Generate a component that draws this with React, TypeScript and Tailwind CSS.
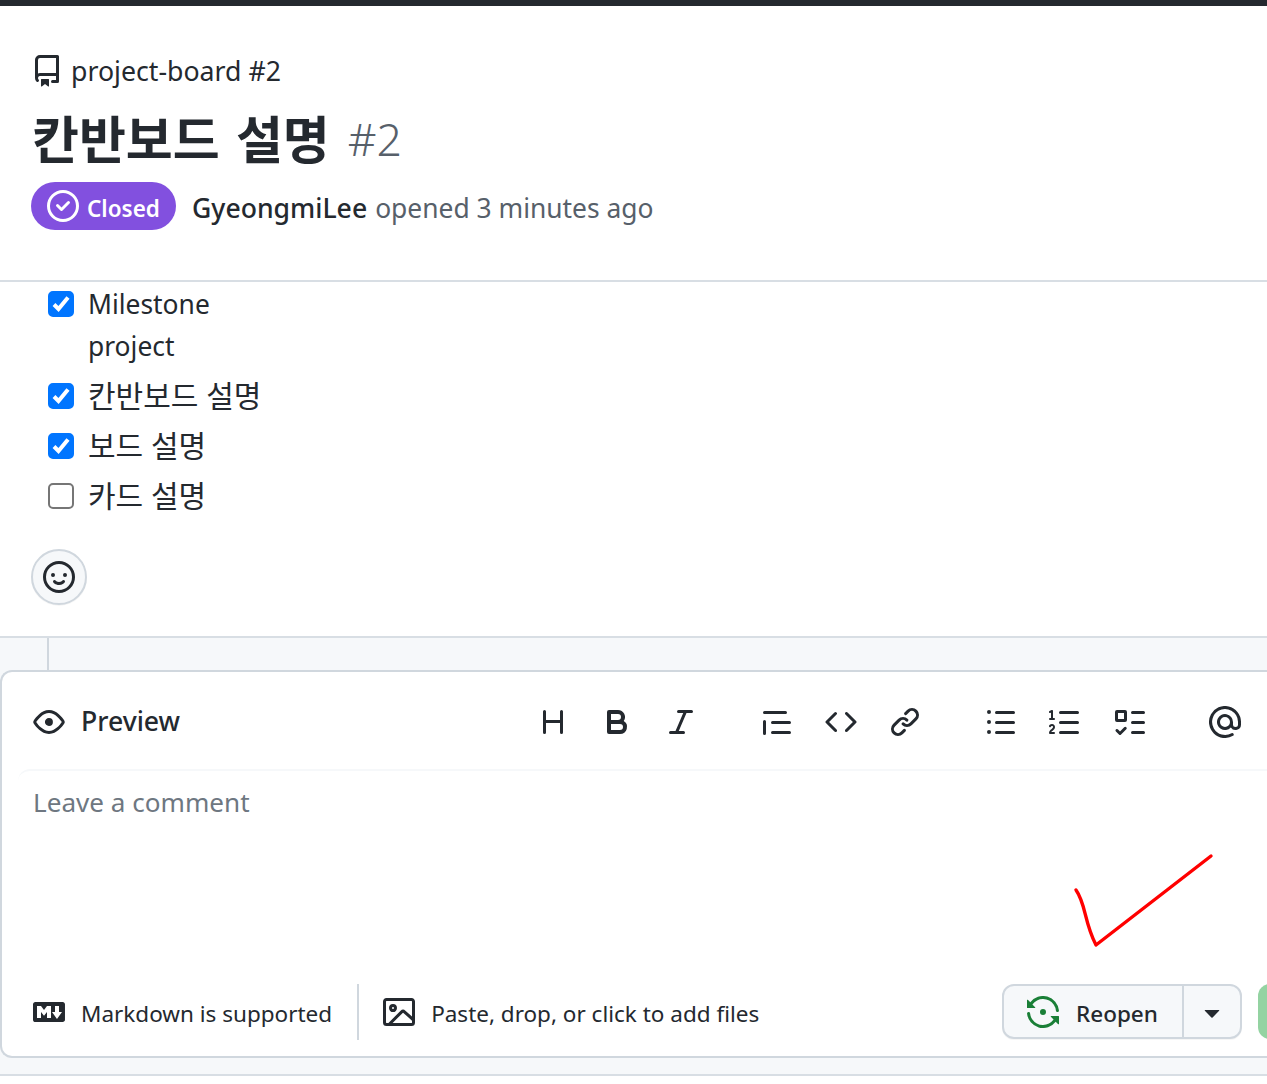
const font = { fontFamily: '"Noto Sans", "Noto Sans CJK KR", sans-serif' };

function Oct({ d, className = "w-8 h-8" }: { d: string; className?: string }) {
  return (
    <svg viewBox="0 0 16 16" fill="currentColor" className={className}>
      <path fillRule="evenodd" d={d} />
    </svg>
  );
}

const icons = {
  repo: "M2 2.5A2.5 2.5 0 0 1 4.5 0h8.75a.75.75 0 0 1 .75.75v12.5a.75.75 0 0 1-.75.75h-2.5a.75.75 0 0 1 0-1.5h1.75v-2h-8a1 1 0 0 0-.714 1.7.75.75 0 1 1-1.072 1.05A2.495 2.495 0 0 1 2 11.5Zm10.5-1h-8a1 1 0 0 0-1 1v6.708A2.486 2.486 0 0 1 4.5 9h8ZM5 12.25a.25.25 0 0 1 .25-.25h3.5a.25.25 0 0 1 .25.25v3.25a.25.25 0 0 1-.4.2l-1.45-1.087a.249.249 0 0 0-.3 0L5.4 15.7a.25.25 0 0 1-.4-.2Z",
  closed: "M11.28 6.78a.75.75 0 0 0-1.06-1.06L7.25 8.69 5.78 7.22a.75.75 0 0 0-1.06 1.06l2 2a.75.75 0 0 0 1.06 0l3.5-3.5ZM16 8A8 8 0 1 1 0 8a8 8 0 0 1 16 0Zm-1.5 0a6.5 6.5 0 1 0-13 0 6.5 6.5 0 0 0 13 0Z",
  smiley: "M8 0a8 8 0 1 1 0 16A8 8 0 0 1 8 0ZM1.5 8a6.5 6.5 0 1 0 13 0 6.5 6.5 0 0 0-13 0Zm3.82 1.636a.75.75 0 0 1 1.038.175l.007.009c.103.118.22.222.35.31.264.178.683.37 1.285.37.602 0 1.02-.192 1.285-.371.13-.088.247-.192.35-.31l.007-.008a.75.75 0 0 1 1.222.87l-.022-.015c.02.013.021.015.021.015v.001l-.001.002-.002.003-.005.007-.014.019a2.066 2.066 0 0 1-.184.213c-.16.166-.338.316-.53.445-.63.418-1.37.638-2.127.629-.946 0-1.652-.308-2.126-.63a3.331 3.331 0 0 1-.715-.657l-.014-.02-.005-.006-.002-.003v-.002h-.001l.613-.432-.614.43a.75.75 0 0 1 .183-1.044ZM12 7a1 1 0 1 1-2 0 1 1 0 0 1 2 0ZM5 8a1 1 0 1 1 0-2 1 1 0 0 1 0 2Z",
  eye: "M8 2c1.981 0 3.671.992 4.933 2.078 1.27 1.091 2.187 2.345 2.637 3.023a1.62 1.62 0 0 1 0 1.798c-.45.678-1.367 1.932-2.637 3.023C11.67 13.008 9.981 14 8 14c-1.981 0-3.671-.992-4.933-2.078C1.797 10.83.88 9.576.43 8.898a1.62 1.62 0 0 1 0-1.798c.45-.677 1.367-1.931 2.637-3.022C4.33 2.992 6.019 2 8 2ZM1.679 7.932a.12.12 0 0 0 0 .136c.411.622 1.241 1.75 2.366 2.717C5.176 11.758 6.527 12.5 8 12.5c1.473 0 2.825-.742 3.955-1.715 1.124-.967 1.954-2.096 2.366-2.717a.12.12 0 0 0 0-.136c-.412-.621-1.242-1.75-2.366-2.717C10.824 4.242 9.473 3.5 8 3.5c-1.473 0-2.825.742-3.955 1.715-1.124.967-1.954 2.096-2.366 2.717ZM8 10a2 2 0 1 1-.001-3.999A2 2 0 0 1 8 10Z",
  heading: "M3.75 2a.75.75 0 0 1 .75.75V7h7V2.75a.75.75 0 0 1 1.5 0v10.5a.75.75 0 0 1-1.5 0V8.5h-7v4.75a.75.75 0 0 1-1.5 0V2.75A.75.75 0 0 1 3.75 2Z",
  bold: "M4 2h4.5a3.501 3.501 0 0 1 2.852 5.53A3.499 3.499 0 0 1 9.5 14H4a1 1 0 0 1-1-1V3a1 1 0 0 1 1-1Zm1 7v3h4.5a1.5 1.5 0 0 0 0-3Zm3.5-2a1.5 1.5 0 0 0 0-3H5v3Z",
  italic: "M6 2.75A.75.75 0 0 1 6.75 2h6.5a.75.75 0 0 1 0 1.5h-2.505l-3.858 9H9.25a.75.75 0 0 1 0 1.5h-6.5a.75.75 0 0 1 0-1.5h2.505l3.858-9H6.75A.75.75 0 0 1 6 2.75Z",
  quote: "M1.75 2.5h10.5a.75.75 0 0 1 0 1.5H1.75a.75.75 0 0 1 0-1.5Zm4 5h8.5a.75.75 0 0 1 0 1.5h-8.5a.75.75 0 0 1 0-1.5Zm0 5h8.5a.75.75 0 0 1 0 1.5h-8.5a.75.75 0 0 1 0-1.5ZM2.5 7.75v6a.75.75 0 0 1-1.5 0v-6a.75.75 0 0 1 1.5 0Z",
  code: "m11.28 3.22 4.25 4.25a.75.75 0 0 1 0 1.06l-4.25 4.25a.749.749 0 0 1-1.275-.326.749.749 0 0 1 .215-.734L13.94 8l-3.72-3.72a.749.749 0 0 1 .326-1.275.749.749 0 0 1 .734.215Zm-6.56 0a.751.751 0 0 1 1.042.018.751.751 0 0 1 .018 1.042L2.06 8l3.72 3.72a.749.749 0 0 1-.326 1.275.749.749 0 0 1-.734-.215L.47 8.53a.75.75 0 0 1 0-1.06Z",
  link: "m7.775 3.275 1.25-1.25a3.5 3.5 0 1 1 4.95 4.95l-2.5 2.5a3.5 3.5 0 0 1-4.95 0 .751.751 0 0 1 .018-1.042.751.751 0 0 1 1.042-.018 1.998 1.998 0 0 0 2.83 0l2.5-2.5a2.002 2.002 0 0 0-2.83-2.83l-1.25 1.25a.751.751 0 0 1-1.042-.018.751.751 0 0 1-.018-1.042Zm-4.69 9.64a1.998 1.998 0 0 0 2.83 0l1.25-1.25a.751.751 0 0 1 1.042.018.751.751 0 0 1 .018 1.042l-1.25 1.25a3.5 3.5 0 1 1-4.95-4.95l2.5-2.5a3.5 3.5 0 0 1 4.95 0 .751.751 0 0 1-.018 1.042.751.751 0 0 1-1.042.018 1.998 1.998 0 0 0-2.83 0l-2.5 2.5a1.998 1.998 0 0 0 0 2.83Z",
  ul: "M5.75 2.5h8.5a.75.75 0 0 1 0 1.5h-8.5a.75.75 0 0 1 0-1.5Zm0 5h8.5a.75.75 0 0 1 0 1.5h-8.5a.75.75 0 0 1 0-1.5Zm0 5h8.5a.75.75 0 0 1 0 1.5h-8.5a.75.75 0 0 1 0-1.5ZM2 14a1 1 0 1 1 0-2 1 1 0 0 1 0 2Zm1-6a1 1 0 1 1-2 0 1 1 0 0 1 2 0ZM2 4a1 1 0 1 1 0-2 1 1 0 0 1 0 2Z",
  ol: "M5 3.25a.75.75 0 0 1 .75-.75h8.5a.75.75 0 0 1 0 1.5h-8.5A.75.75 0 0 1 5 3.25Zm0 5a.75.75 0 0 1 .75-.75h8.5a.75.75 0 0 1 0 1.5h-8.5A.75.75 0 0 1 5 8.25Zm0 5a.75.75 0 0 1 .75-.75h8.5a.75.75 0 0 1 0 1.5h-8.5a.75.75 0 0 1-.75-.75ZM.924 10.32a.5.5 0 0 1-.851-.525l.001-.001.001-.002.002-.004.007-.011c.097-.144.215-.273.348-.384.228-.19.588-.392 1.068-.392.468 0 .858.181 1.126.484.259.294.377.673.377 1.038 0 .987-.686 1.495-1.156 1.845l-.047.035c-.303.225-.522.4-.654.597h1.357a.5.5 0 0 1 0 1H.5a.5.5 0 0 1-.5-.5c0-1.005.692-1.52 1.167-1.875l.035-.025c.531-.396.8-.625.8-1.078a.57.57 0 0 0-.128-.376C1.806 10.068 1.695 10 1.5 10a.658.658 0 0 0-.429.163.835.835 0 0 0-.144.153ZM2.003 2.5V6h.503a.5.5 0 0 1 0 1H.5a.5.5 0 0 1 0-1h.503V3.308l-.28.14a.5.5 0 0 1-.446-.895l1.003-.5a.5.5 0 0 1 .723.447Z",
  task: "M2 2h4a1 1 0 0 1 1 1v4a1 1 0 0 1-1 1H2a1 1 0 0 1-1-1V3a1 1 0 0 1 1-1Zm4.655 8.595a.75.75 0 0 1 0 1.06L4.03 14.28a.75.75 0 0 1-1.06 0l-1.5-1.5a.749.749 0 0 1 .326-1.275.749.749 0 0 1 .734.215l.97.97 2.095-2.095a.75.75 0 0 1 1.06 0ZM9.75 2.5h5.5a.75.75 0 0 1 0 1.5h-5.5a.75.75 0 0 1 0-1.5Zm0 5h5.5a.75.75 0 0 1 0 1.5h-5.5a.75.75 0 0 1 0-1.5Zm0 5h5.5a.75.75 0 0 1 0 1.5h-5.5a.75.75 0 0 1 0-1.5Zm-7.25-9v3h3v-3Z",
  mention: "M4.75 2.37a6.501 6.501 0 0 0 6.5 11.26.75.75 0 0 1 .75 1.298A7.999 7.999 0 0 1 .989 4.148 8 8 0 0 1 16 7.75v1.5a2.75 2.75 0 0 1-5.072 1.475 3.999 3.999 0 0 1-6.65-4.19A4 4 0 0 1 12 8v1.25a1.25 1.25 0 0 0 2.5 0V7.867a6.5 6.5 0 0 0-9.75-5.496ZM10.5 8a2.5 2.5 0 1 0-5 0 2.5 2.5 0 0 0 5 0Z",
  markdown: "M14.85 3c.63 0 1.15.52 1.14 1.15v7.7c0 .63-.51 1.15-1.15 1.15H1.15C.52 13 0 12.48 0 11.84V4.15C0 3.52.52 3 1.15 3ZM9 11V5H7L5.5 7 4 5H2v6h2V8l1.5 1.92L7 8v3Zm2.99.5L14.5 8H13V5h-2v3H9.5Z",
  image: "M16 13.25A1.75 1.75 0 0 1 14.25 15H1.75A1.75 1.75 0 0 1 0 13.25V2.75C0 1.784.784 1 1.75 1h12.5c.966 0 1.75.784 1.75 1.75ZM1.75 2.5a.25.25 0 0 0-.25.25v10.5c0 .138.112.25.25.25h.94l.03-.03 6.077-6.078a1.75 1.75 0 0 1 2.412-.06L14.5 10.31V2.75a.25.25 0 0 0-.25-.25Zm12.5 11a.25.25 0 0 0 .25-.25v-.917l-4.298-3.889a.25.25 0 0 0-.344.009L4.81 13.5ZM7 6a2 2 0 1 1-3.999.001A2 2 0 0 1 7 6ZM5.5 6a.5.5 0 1 0-1 0 .5.5 0 0 0 1 0Z",
  caret: "m4.427 7.427 3.396 3.396a.25.25 0 0 0 .354 0l3.396-3.396A.25.25 0 0 0 11.396 7H4.604a.25.25 0 0 0-.177.427Z",
};

const reopenArc = "M5.029 2.217a6.5 6.5 0 0 1 9.437 5.11.75.75 0 1 0 1.492-.154 8 8 0 0 0-14.315-4.03L.427 1.927A.25.25 0 0 0 0 2.104V5.75A.25.25 0 0 0 .25 6h3.646a.25.25 0 0 0 .177-.427L2.715 4.215a6.491 6.491 0 0 1 2.314-1.998Z";

function ReopenIcon() {
  return (
    <svg viewBox="0 0 16 16" fill="currentColor" className="w-8 h-8 text-[#1a7f37]">
      <path d={reopenArc} />
      <path d={reopenArc} transform="rotate(180 8 8)" />
      <path d="M9.5 8a1.5 1.5 0 1 1-3.001-.001A1.5 1.5 0 0 1 9.5 8Z" />
    </svg>
  );
}

function Task({ label, checked, rowClass, labelClass }: { label: string; checked: boolean; rowClass: string; labelClass: string }) {
  return (
    <div className={`flex items-center ${rowClass}`}>
      <span className="relative w-[26px] h-[26px] shrink-0">
        <input
          type="checkbox"
          checked={checked}
          readOnly
          className="block appearance-none w-[26px] h-[26px] m-0 rounded-[5px] border-2 border-[#767676] bg-white checked:bg-[#0075ff] checked:border-[#0075ff]"
        />
        {checked && (
          <svg viewBox="0 0 26 26" fill="none" className="absolute inset-0 w-[26px] h-[26px]">
            <path d="M6 13.5 10.5 18 20 6.5" stroke="#fff" strokeWidth="4" />
          </svg>
        )}
      </span>
      <span className={`ml-[14px] ${labelClass}`}>{label}</span>
    </div>
  );
}

function Toolbar() {
  const groups = [
    [icons.heading, icons.bold, icons.italic],
    [icons.quote, icons.code, icons.link],
    [icons.ul, icons.ol, icons.task],
    [icons.mention],
  ];
  return (
    <div className="ml-auto flex gap-16 pr-[26px] text-[#24292f]">
      {groups.map((g, i) => (
        <div key={i} className="flex gap-8">
          {g.map((d) => (
            <Oct key={d} d={d} />
          ))}
        </div>
      ))}
    </div>
  );
}

export default function App() {
  return (
    <div style={font} className="w-[1267px] h-[1084px] overflow-hidden bg-white text-[#24292f] text-[26.4px] relative">
      <div className="h-[6px] bg-[#24292f]" />

      <header className="h-[276px] border-b-2 border-[#d8dee4] pl-8 pt-[47px]">
        <div className="flex items-center h-[34px] leading-[34px] text-[26.7px]">
          <Oct d={icons.repo} className="w-8 h-8 mr-[7px] mt-[2px] -ml-[1px]" />
          <span className="ml-[2px] pt-[2px] -translate-x-[1px]">project-board #2</span>
        </div>
        <h1 className="flex items-baseline h-[66px] mt-[19px] leading-[66px] text-[51px] font-bold [word-spacing:3px]">
          칸반보드 설명
          <span className="ml-[18px] text-[44.5px] font-light text-[#57606a] -translate-y-[3px]">#2</span>
        </h1>
        <div className="flex items-center mt-[10px] h-[48px]">
          <span className="flex items-center h-[48px] w-[145px] -ml-[1px] rounded-full bg-[#8250df] text-white text-[22.5px] font-semibold pl-4">
            <Oct d={icons.closed} className="w-8 h-8 mr-[8px]" />
            <span className="pt-[5px]">Closed</span>
          </span>
          <span className="ml-4 pt-[6px] font-medium text-[26.6px]">GyeongmiLee</span>
          <span className="ml-2 pt-[6px] text-[#57606a]">opened 3 minutes ago</span>
        </div>
      </header>

      <section className="h-[354px] pl-12 pt-[1px]">
        <Task label="Milestone" checked rowClass="h-[42px]" labelClass="pt-[2px]" />
        <div className="h-[42px] leading-[42px] pl-[40px]">project</div>
        <Task label="칸반보드 설명" checked rowClass="h-[50px] mt-[4px] text-[30px]" labelClass="pb-[2px]" />
        <Task label="보드 설명" checked rowClass="h-[50px] text-[30px]" labelClass="pb-[2px]" />
        <Task label="카드 설명" checked={false} rowClass="h-[50px] text-[30px]" labelClass="pb-[2px]" />
        <div className="mt-[28px] -ml-[17px] w-[56px] h-[56px] rounded-full border-2 border-[#d0d7de] bg-[#f6f8fa] flex items-center justify-center shadow-[0_1px_0_rgba(27,31,36,0.04)]">
          <Oct d={icons.smiley} />
        </div>
      </section>

      <section className="h-[440px] bg-[#f6f8fa] border-y-2 border-[#d8dee4]">
        <div className="ml-[47px] w-[2px] h-[32px] bg-[#d0d7de]" />
        <div className="h-[388px] rounded-l-xl border-2 border-r-0 border-[#d0d7de] bg-white overflow-hidden flex flex-col">
          <div className="flex items-center h-[97px] pt-[2px] pl-[31px]">
            <Oct d={icons.eye} />
            <span className="ml-4 font-medium text-[26.6px]">Preview</span>
            <Toolbar />
          </div>
          <div className="h-[196px] ml-4 rounded-tl-xl border-t-2 border-[#f6f8fa] pl-[15px] pt-[11px] text-[#6e7781] text-[26.1px] leading-[40px]">
            Leave a comment
          </div>
          <div className="flex items-center flex-1 pt-[2px] pl-[31px] text-[22.5px]">
            <Oct d={icons.markdown} />
            <span className="ml-4 pt-[4px]">Markdown is supported</span>
            <div className="ml-[25px] w-[2px] h-[56px] bg-[#d0d7de]" />
            <Oct d={icons.image} className="w-8 h-8 ml-[24px]" />
            <span className="ml-4 pt-[4px]">Paste, drop, or click to add files</span>
            <div className="ml-auto flex h-[55px] w-[240px] rounded-xl border-2 border-[#d0d7de] bg-[#f6f8fa] shadow-[0_1px_0_rgba(27,31,36,0.04)] font-medium">
              <div className="flex items-center pl-[23px] w-[180px] border-r-2 border-[#d0d7de]">
                <ReopenIcon />
                <span className="ml-[17px] pt-[4px]">Reopen</span>
              </div>
              <div className="flex-1 flex items-center justify-center">
                <Oct d={icons.caret} className="w-8 h-8" />
              </div>
            </div>
            <div className="ml-4 -mr-[111px] w-[120px] h-[55px] shrink-0 rounded-xl bg-[#94d3a2]" />
          </div>
        </div>
      </section>

      <svg viewBox="0 0 160 110" fill="none" className="absolute left-[1065px] top-[846px] w-[160px] h-[110px]">
        <path
          d="M11 44 C 21 58, 19 76, 31 99 L 146 10"
          stroke="#ff0000"
          strokeWidth="3.4"
          strokeLinecap="round"
          strokeLinejoin="round"
        />
      </svg>
    </div>
  );
}
